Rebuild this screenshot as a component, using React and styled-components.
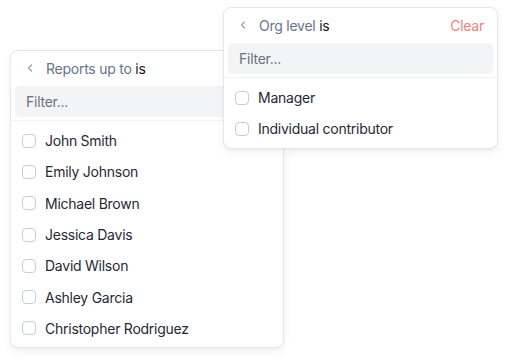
import React from "react";
import styled, { createGlobalStyle } from "styled-components";

const GlobalStyle = createGlobalStyle`
  body {
    margin: 0;
    background: #fff;
    font-family: "Inter", "Liberation Sans", sans-serif;
    letter-spacing: -0.25px;
  }
`;

const Canvas = styled.div`
  position: relative;
  width: 507px;
  height: 359px;
  overflow: hidden;
`;

const Popover = styled.div`
  position: absolute;
  left: ${(p) => p.$left}px;
  top: ${(p) => p.$top}px;
  width: ${(p) => p.$width}px;
  z-index: ${(p) => p.$z || 1};
  box-sizing: border-box;
  display: flex;
  flex-direction: column;
  background: #fff;
  border: 1px solid #e5e7eb;
  border-radius: 8px;
  box-shadow: 0 4px 10px rgba(15, 23, 42, 0.05), 0 1px 2px rgba(15, 23, 42, 0.04);
  padding: 2px 4px 3px;
`;

const Header = styled.div`
  display: flex;
  align-items: center;
  height: 30px;
  padding: 0 9px 0 10px;
  font-size: 14px;
`;

const Back = styled.span`
  display: flex;
  align-items: center;
  color: #94a3b8;
  margin-right: 11px;
`;

const Field = styled.span`
  color: #64748b;
  b {
    font-weight: 400;
    color: #111827;
  }
`;

const Clear = styled.span`
  margin-left: auto;
  color: #f78080;
`;

const Filter = styled.div`
  height: 31px;
  margin-top: 3px;
  display: flex;
  align-items: center;
  padding: 0 11px;
  background: #f3f4f6;
  border-radius: 5px;
  font-size: 14px;
  color: #6b7280;
`;

const Divider = styled.div`
  height: 1px;
  background: #f1f2f4;
  margin: 3px -4px 4px;
`;

const Row = styled.label`
  display: flex;
  align-items: center;
  height: 31.3px;
  padding: 0 7px;
  gap: 9px;
  font-size: 14px;
  color: #1f2937;
`;

const Box = styled.span`
  flex-shrink: 0;
  width: 14px;
  height: 14px;
  box-sizing: border-box;
  border: 1px solid #c7cdd6;
  border-radius: 4px;
  background: #fff;
`;

const Chevron = () => (
  <svg width="10" height="10" viewBox="0 0 10 10" fill="none">
    <path d="M6.5 2 L3.5 5 L6.5 8" stroke="currentColor" strokeWidth="1.3" strokeLinecap="round" strokeLinejoin="round" />
  </svg>
);

const FilterPanel = ({ field, options, clearable, ...pos }) => (
  <Popover {...pos}>
    <Header>
      <Back><Chevron /></Back>
      <Field>{field} <b>is</b></Field>
      {clearable && <Clear>Clear</Clear>}
    </Header>
    <Filter>Filter...</Filter>
    <Divider />
    {options.map((o) => (
      <Row key={o}>
        <Box />
        {o}
      </Row>
    ))}
  </Popover>
);

const people = [
  "John Smith",
  "Emily Johnson",
  "Michael Brown",
  "Jessica Davis",
  "David Wilson",
  "Ashley Garcia",
  "Christopher Rodriguez",
];

export default function App() {
  return (
    <>
      <GlobalStyle />
      <Canvas>
        <FilterPanel $left={10} $top={50} $width={274} field="Reports up to" options={people} />
        <FilterPanel
          $left={223}
          $top={7}
          $width={275}
          $z={2}
          field="Org level"
          clearable
          options={["Manager", "Individual contributor"]}
        />
      </Canvas>
    </>
  );
}
